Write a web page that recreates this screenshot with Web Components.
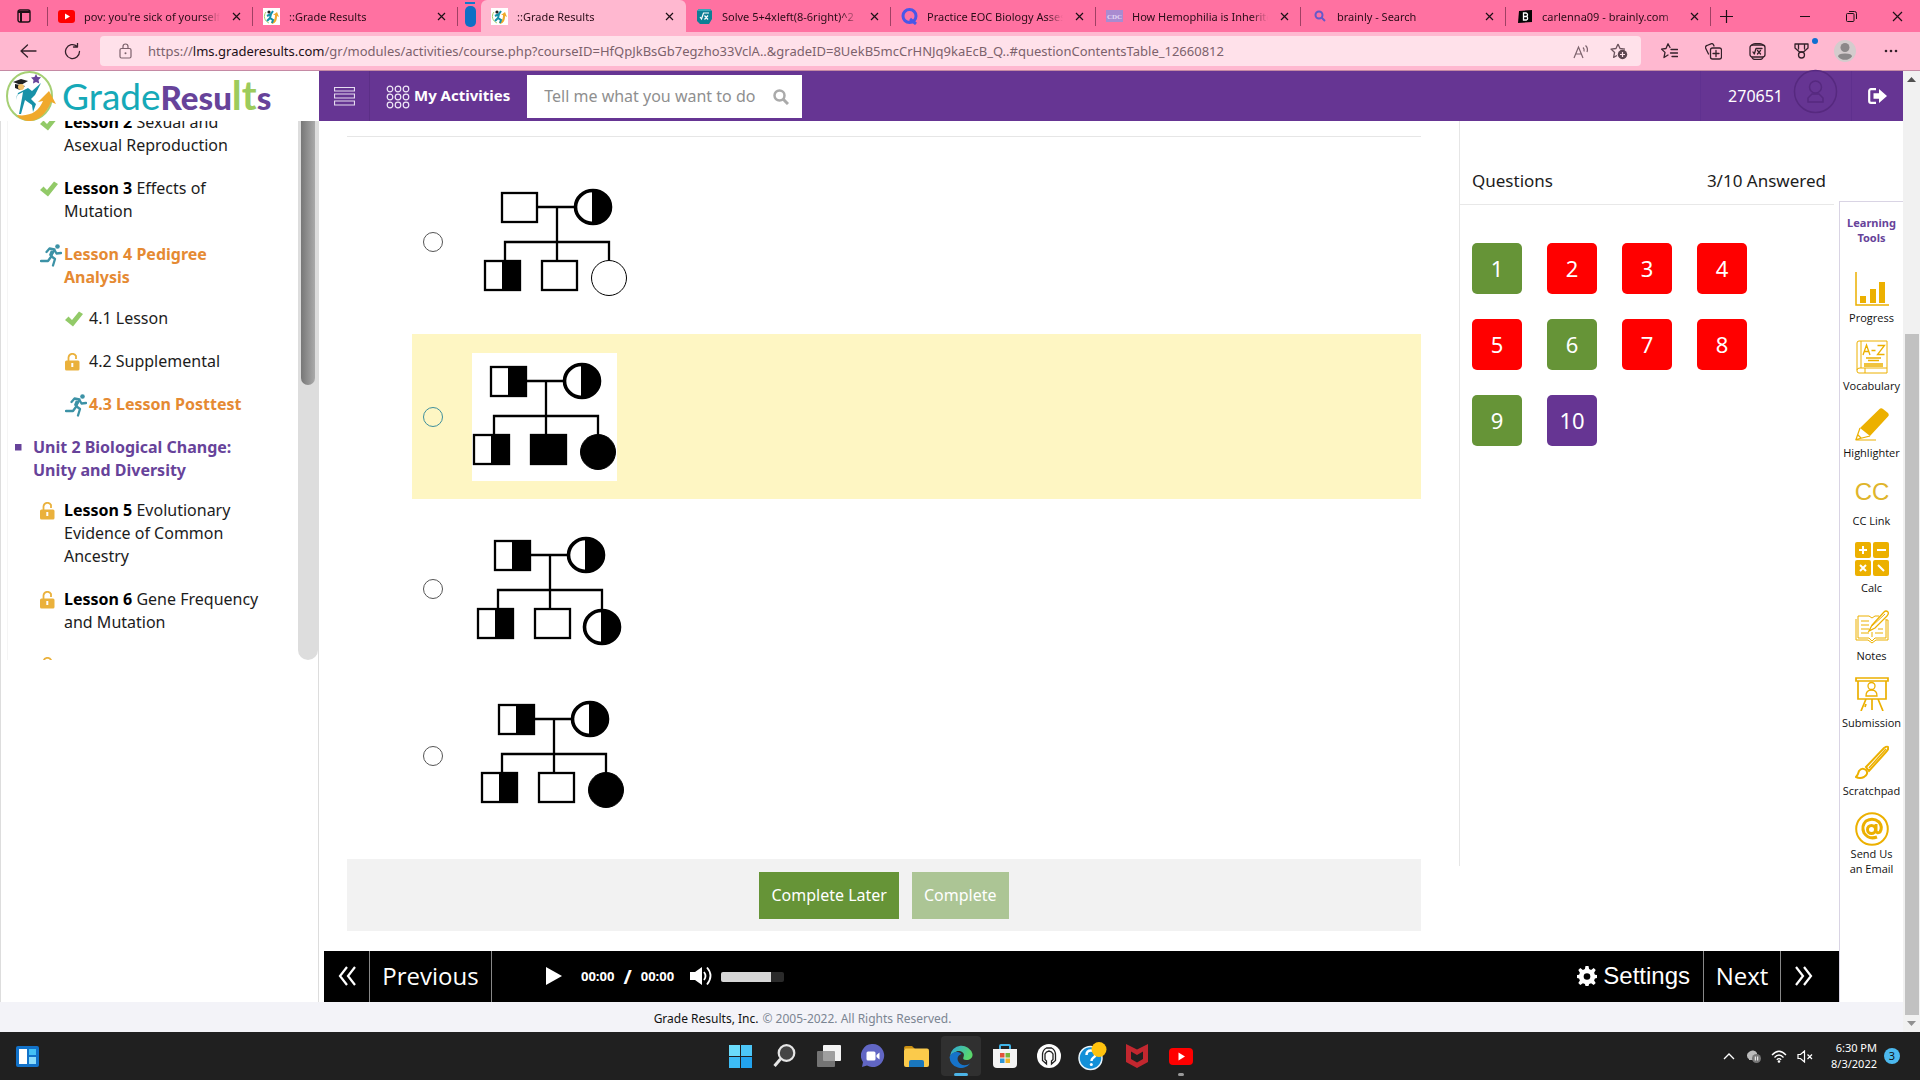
<!DOCTYPE html>
<html lang="en">
<head>
<meta charset="utf-8">
<title>::Grade Results</title>
<style>
html,body{margin:0;height:100%}
body{font-family:"Noto Sans","Open Sans",sans-serif;color:#1c1c1c;background:#fff;overflow:hidden}
</style>
</head>
<body>
<desktop-screen></desktop-screen>
<script>
const BASE = `*{box-sizing:border-box}a{color:inherit;text-decoration:none}button{font:inherit;color:inherit;background:none;border:0;padding:0;margin:0;cursor:pointer}svg{display:block;flex:none}ul{list-style:none;margin:0;padding:0}`;
function define(name, css, markup) {
  customElements.define(name, class extends HTMLElement {
    constructor() {
      super();
      this.attachShadow({ mode: 'open' });
    }
    connectedCallback() {
      const t = document.createElement('template');
      t.innerHTML = `<style>${BASE}${css}</style>` + (typeof markup === 'function' ? markup(this) : markup);
      this.shadowRoot.replaceChildren(t.content.cloneNode(true));
    }
  });
}
const svg = (w, h, body, vb) => `<svg width="${w}" height="${h}" viewBox="${vb || `0 0 ${w} ${h}`}" fill="none" aria-hidden="true">${body}</svg>`;

/* ---------- shared artwork ---------- */
const RUNNER_BODY = `<circle cx="17.500" cy="2.500" r="2.300" fill="currentColor"/><path d="M6.500 8 L9.500 4.500 L14.500 5.500 L11 12 L15 15 L13 21.500 M14.500 6 L16.500 9.500 L21 9 M10.500 13.500 L8 17 L1 17" stroke="currentColor" stroke-width="2.300" stroke-linecap="round" stroke-linejoin="round"/><path d="M12.500 7l-2 5" stroke="currentColor" stroke-width="3.500"/>`;
const FAVICON = svg(17, 17, `<rect width="17" height="17" fill="#fff"/><path d="M3 4a7 7 0 0 0 3 11" stroke="#a6cf6b"/><path d="M9 16c4-1 5-4 5-8l2 1-2-5-4 3 2 0c0 4-1 6-4 7z" fill="#f0a92c"/><path d="M10 3L8 6 4 8M8 6l-1 4 3 2-1 3M7 10l-3 3" stroke="#1390a8" stroke-width="2"/><circle cx="6" cy="4" r="1.600" fill="#222"/>`);
const FAVS = {
  youtube: svg(17, 13, `<rect width="17" height="13" rx="3" fill="#f00"/><path d="M7 3.500v6l5-3z" fill="#fff"/>`),
  grade: FAVICON,
  math: svg(17, 17, `<path d="M3 1h11l2 2v8l-3 5H4l-3-3V3z" fill="#0e7f95"/><path d="M1 3l2-2h11l1 2z" fill="#37a7b9"/><path d="M4 9l1.500 2L7.500 5H13M8.500 7.500l3.500 4M12 7.500l-3.500 4" stroke="#fff" stroke-width="1.200"/>`),
  quiz: svg(17, 17, `<circle cx="8.500" cy="8" r="6.500" stroke="#4957e8" stroke-width="3"/><path d="M9 11l6 5" stroke="#4957e8" stroke-width="3"/>`),
  cdc: svg(17, 12, `<rect width="17" height="12" fill="#a98bd0"/><text x="8.500" y="9" font-family="Liberation Serif" font-weight="700" font-size="7" fill="#e4d7f5" text-anchor="middle">CDC</text>`),
  search: svg(12, 12, `<circle cx="5" cy="5" r="3.500" stroke="#6559c9" stroke-width="2"/><path d="M7.500 7.500l3.500 3.500" stroke="#6559c9" stroke-width="2"/>`),
  brainly: svg(14, 13, `<path d="M1 1L14 0V12L0 13z" fill="#050505"/><path d="M5.500 3v7h3a2 2 0 0 0 0-3.600A1.800 1.800 0 0 0 8 3zM5.500 6.500h2.500" stroke="#fff" stroke-width="1.300"/>`)
};
const close = (s = 9) => svg(s, s, `<path d="M1 1L${s - 1} ${s - 1}M${s - 1} 1L1 ${s - 1}" stroke="#1d1016" stroke-width="1.200"/>`);

/* ---------- browser chrome ---------- */
define('browser-tab', `
:host{display:flex;align-items:center;flex:0 1 205px;min-width:0;height:32px;padding:0 11px 0 10px;position:relative;font-size:11px;color:#2a0d18}
:host([active]){background:#ffb8d0;border-radius:6px 6px 0 0}
:host([line])::after{content:"";position:absolute;right:0;top:7px;width:1px;height:19px;background:#a04064}
.i{width:17px;display:flex;justify-content:center;flex:none}
span.t{flex:1;min-width:0;margin:0 10px 0 9px;line-height:17px;white-space:nowrap;overflow:hidden;-webkit-mask-image:linear-gradient(90deg,#000 88%,transparent)}
button{width:12px;display:flex;justify-content:center;flex:none}`,
  el => `<span class="i">${FAVS[el.getAttribute('icon')]}</span><span class="t"><slot></slot></span><button aria-label="Close tab">${close()}</button>`);

define('tab-strip', `
:host{display:flex;height:32px;background:#ff71a1;align-items:stretch}
.menu{width:48px;display:flex;align-items:center;justify-content:center;position:relative}
.menu::after{content:"";position:absolute;right:0;top:7px;width:1px;height:19px;background:#a04064}
.group{width:23px;display:flex;flex-direction:column;align-items:center;gap:2px;padding:2px 0 0 1px}
.group i{width:10px;height:2px;background:#0f79cc}.group b{width:11px;height:21px;border-radius:5px;background:#0f6fc5}
.new{width:30px;display:flex;align-items:center;justify-content:center}
.win{margin-left:auto;display:flex}.win button{width:46px;display:flex;align-items:center;justify-content:center}`, `
<button class="menu" aria-label="Tab actions">${svg(14, 14, '<rect x="1" y="1" width="12" height="12" rx="2" stroke="#1d1016" stroke-width="1.400"/><path d="M1 3h12M4 3v10" stroke="#1d1016" stroke-width="2"/>')}</button>
<browser-tab icon="youtube" line>pov: you're sick of yourself</browser-tab>
<browser-tab icon="grade" line>::Grade Results</browser-tab>
<div class="group"><i></i><b></b></div>
<browser-tab icon="grade" active>::Grade Results</browser-tab>
<browser-tab icon="math" line>Solve 5+4xleft(8-6right)^2</browser-tab>
<browser-tab icon="quiz" line>Practice EOC Biology Assessment</browser-tab>
<browser-tab icon="cdc" line>How Hemophilia is Inherited</browser-tab>
<browser-tab icon="search" line>brainly - Search</browser-tab>
<browser-tab icon="brainly" line>carlenna09 - brainly.com</browser-tab>
<button class="new" aria-label="New tab">${svg(15, 15, '<path d="M7.500 1v13M1 7.500h13" stroke="#1d1016" stroke-width="1.200"/>')}</button>
<div class="win"><button aria-label="Minimize">${svg(10, 10, '<path d="M0 5.500h10" stroke="#1d1016"/>')}</button>
<button aria-label="Restore">${svg(11, 11, '<rect x=".5" y="2.500" width="7.500" height="8" rx="1" stroke="#1d1016"/><path d="M3 .5h5.500a2 2 0 0 1 2 2V8" stroke="#1d1016"/>')}</button>
<button aria-label="Close">${close(11)}</button></div>`);

const S = 'stroke="#34212a" stroke-width="1.300" stroke-linejoin="round" stroke-linecap="round"';
define('address-bar', `
:host{display:flex;height:39px;background:#ffb8d0;border-bottom:1px solid #c58aa4;align-items:center;padding:0 6px}
button{width:44px;height:34px;display:flex;align-items:center;justify-content:center;position:relative;flex:none}
.box{flex:1;min-width:0;height:30px;margin:0 6px;border-radius:4px;background:#ffe1ea;display:flex;align-items:center;padding:0 4px 0 19px;gap:16px}
.acts{display:flex}.box button{width:37px}
.url{flex:1;min-width:0;font-size:13px;line-height:20px;color:#7c626c;white-space:nowrap;overflow:hidden}
.url b{font-weight:400;color:#1d1016}
.dot{position:absolute;right:5px;top:4px;width:6px;height:6px;border-radius:50%;background:#0f6fd0}
.more{width:46px;margin-left:1px}`, `
<button aria-label="Back">${svg(17, 14, `<path d="M7.500 1L1 7l6.500 6M1 7h15" ${S}/>`)}</button>
<button aria-label="Refresh">${svg(17, 17, `<path d="M15.500 8.500a7 7 0 1 1-2.500-5.300M13.500 0v4h-4" ${S}/>`)}</button>
<div class="box">${svg(13, 16, '<rect x="1" y="5.500" width="11" height="9.500" rx="1.500" stroke="#7c626c" stroke-width="1.200"/><path d="M4 5.500V3.500a2.500 2.500 0 0 1 5 0v2" stroke="#7c626c" stroke-width="1.200"/><circle cx="6.500" cy="10.300" r="1" fill="#7c626c"/>')}
<div class="url">https://<b>lms.graderesults.com</b>/gr/modules/activities/course.php?courseID=HfQpJkBsGb7egzho33VclA..&amp;gradeID=8UekB5mcCrHNJq9kaEcB_Q..#questionContentsTable_12660812</div>
<div class="acts"><button aria-label="Read aloud">${svg(17, 15, '<path d="M1 14L5.500 3 10 14M2.800 10h5.500M10 3.500a4 4 0 0 1 1 4M12.500 1.500a6 6 0 0 1 1.500 6.500" stroke="#7c626c" stroke-width="1.200"/>')}</button>
<button aria-label="Add to favorites">${svg(18, 17, '<path d="M8 1l2 4.500 5 .6M8 1L6 5.500l-5 .6 3.600 3.300-1 5L7 12.500" stroke="#6d545e" stroke-width="1.300" stroke-linejoin="round"/><circle cx="12.500" cy="11.500" r="4.700" fill="#5c4650"/><path d="M12.500 9v5M10 11.500h5" stroke="#ffe1ea" stroke-width="1.200"/>')}</button></div></div>
<button aria-label="Favorites">${svg(17, 16, `<path d="M9 4.500L7 .8 5 5.500l-4.500.6L4 9.400 3 14.500 7 12M10 6.500h6.500M9.500 10h7M11 13.500h5.500" ${S}/>`)}</button>
<button aria-label="Collections">${svg(17, 17, `<rect x="5.500" y="5" width="11" height="11" rx="2" ${S}/><path d="M11 7.500v6M8 10.500h6M3.500 11L.8 5.500A2 2 0 0 1 2 2.500L6 .8a2 2 0 0 1 2.500 1L9 3" ${S}/>`)}</button>
<button aria-label="Math solver">${svg(17, 17, `<rect x="1" y="2" width="15" height="12" rx="2.500" ${S}/><path d="M3 14.500q1 2 3 2h5q2 0 3-2M3 2Q4 .7 6 .7h5q2 0 3 1.300M4 9l1.300 2L7 5.500h6M8.500 7.500l3 3.500M11.500 7.500l-3 3.500" ${S}/>`)}</button>
<button aria-label="Rewards">${svg(15, 16, `<path d="M1 1h13v4l-4.500 4h-4L1 5zM4.500 1v5M10.500 1v5" ${S}/><circle cx="7.500" cy="12" r="3" ${S}/>`)}<i class="dot"></i></button>
<button aria-label="Profile">${svg(22, 22, '<circle cx="11" cy="11" r="11" fill="#d4cccd"/><circle cx="11" cy="7.500" r="4.500" fill="#8b8889"/><path d="M4 16.500q0-3 7-3t7 3a9 9 0 0 1-14 0z" fill="#8b8889"/>')}</button>
<button class="more" aria-label="More">${svg(14, 4, '<g fill="#34212a"><circle cx="2" cy="2" r="1.300"/><circle cx="7" cy="2" r="1.300"/><circle cx="12" cy="2" r="1.300"/></g>')}</button>`);

/* ---------- application header ---------- */
define('grade-logo', `
:host{display:flex;align-items:center;width:319px;height:50px;background:#fff;padding-left:6px;flex:none}
.w{font-family:Lato,sans-serif;font-size:37px;line-height:50px;margin-left:5px;color:#16a9b8;white-space:nowrap}
.w b{font-weight:900;font-size:33px;color:#67439a}.w i{font-style:normal;font-weight:700;font-size:40px;color:#9dcb5c}`, `
${svg(51, 50, `<ellipse cx="23.500" cy="25" rx="22.500" ry="24" stroke="#a5cf74" stroke-width="2"/><path d="M11 44c13 2 22-4 26-14l-5 1 11-11 7 13-5-2c-5 14-17 22-27 18-4-1-6-3-7-5z" fill="#f0a92c"/><path d="M12 22l10-5 4 3 9-8-6 12-4 4 5 5-3 8-1-7-7-5-4 14-2 0 3-16 1-6-6 3-1 5z" fill="#1791a8"/><path d="M7 11l8-3 7 2-7 4zM9 13v4l5 2 5-4" fill="#222"/><circle cx="15" cy="16" r="3" fill="#f5c46b"/><path d="M30 3l1.500 3 3.500.3-2.500 2.700.8 3.500-3.300-1.500-3 1.500.5-3.500L25 6.500l3.500-.5z" fill="#67439a"/>`)}
<span class="w">Grade<b>Resu</b><i>lt</i><b>s</b></span>`);

define('app-header', `
:host{display:flex;height:50px;background:#663593;color:#fff;flex:none}
.m{width:51px;display:flex;align-items:center;justify-content:center;border-right:1px solid #5c2f87}
.act{display:flex;align-items:center;gap:4px;font-weight:700;font-size:15px;padding:0 17px 2px 16px}
.act svg{margin-top:3px}
.s{display:flex;align-items:center;width:275px;height:43px;margin-top:4px;background:#fff;padding:0 13px 0 17px}
.s input{flex:1;min-width:0;border:0;outline:0;padding:0 0 1px;font:16px/25px "Noto Sans",sans-serif;color:#444}
.s input::placeholder{color:#8f8f8f;opacity:1}
.u{margin-left:auto;display:flex;align-items:center;border-left:1px solid #603190;border-right:1px solid #5f308e;padding:0 13px 0 27px;font-size:16px;gap:10px}
.u svg{margin-bottom:9px}
.o{width:51px;display:flex;align-items:center;justify-content:center}`, `
<grade-logo></grade-logo>
<button class="m" aria-label="Menu">${svg(21, 20, '<path d="M.5 1.500h20v3.500H.5zM.5 8h20v4H.5zM.5 15h20v4H.5z" stroke="#e6dcf0" stroke-width="1.200"/>')}</button>
<a class="act" href="#activities">${svg(24, 24, [4, 12, 20].map(y => [4, 12, 20].map(x => `<circle cx="${x}" cy="${y}" r="2.800" stroke="#efe8f6" stroke-width="1.200"/>`).join('')).join(''))}My Activities</a>
<label class="s"><input type="text" placeholder="Tell me what you want to do" aria-label="Tell me what you want to do">${svg(16, 16, '<circle cx="6.500" cy="6.500" r="5" stroke="#aaa" stroke-width="2.500"/><path d="M10 10l5 5" stroke="#aaa" stroke-width="3"/>')}</label>
<a class="u" href="#profile"><span>270651</span>${svg(45, 45, '<g stroke="#56297f" stroke-width="1.500"><circle cx="22.500" cy="22.500" r="21"/><circle cx="22.500" cy="18" r="6"/><path d="M15 33v-4l4-4h7l4 4v4z"/></g>')}</a>
<button class="o" aria-label="Log out">${svg(19, 16, '<path d="M8 1.200H3A1.800 1.800 0 0 0 1.200 3v10A1.800 1.800 0 0 0 3 14.800h5" stroke="#fff" stroke-width="2.200"/><path d="M5.500 5.300H11V1l8 7-8 7v-4.300H5.500z" fill="#fff"/>')}</button>`);

/* ---------- lesson sidebar ---------- */
const STATUS = {
  done: svg(18, 16, '<path d="M0 9l3.500-3.500L7 9 14 .5 18 3 8 15.500z" fill="#92ca68"/>'),
  open: svg(15, 18, '<path d="M3.500 8V4.500a4 4 0 0 1 7.500-1.500v3" stroke="#eab13c" stroke-width="1.800"/><rect y="7.500" width="14.500" height="10" rx="1.500" fill="#eab13c"/><path d="M7.300 10v4" stroke="#fff" stroke-width="2"/>'),
  active: `<span style="color:#3c92a6">${svg(22, 23, RUNNER_BODY)}</span>`,
  unit: svg(7, 7, '<path d="M0 0h6.500v6.500H0z" fill="#67439a"/>')
};
define('lesson-item', `
:host{display:block}
a{display:flex;font-size:16px;line-height:23px}
.i{width:24px;flex:none;padding-top:4px}
:host([status=open]) .i{padding-top:3px}
:host([status=active]) .i{padding-top:1px}
:host([status=active]) a{color:#e58a33;font-weight:700}
:host([status=unit]) .i{width:18px;padding-top:8px}
:host([status=unit]) a{color:#67439a;font-weight:700}
::slotted(b){font-weight:700;color:#000}`,
  el => `<a href="#lesson"><span class="i">${STATUS[el.getAttribute('status')]}</span><span><slot></slot></span></a>`);

define('lesson-sidebar', `
:host{display:flex;flex-direction:column;width:319px;flex:none;border-right:1px solid #ddd;border-left:1px solid #ddd;padding-left:6px}
.view{display:flex;height:539px;overflow:hidden;border-left:1px solid #f5f5f5}
nav{flex:1;padding:0 28px 0 7px;margin-top:-10px}
.l{display:flex;flex-direction:column;gap:20px;margin-left:25px}
.l .l{margin:18px 0 0 25px}
.n{margin:19px 0 17px}
.bar{width:20px;background:#ddd;border-radius:0 0 10px 10px;padding:0 3px}
.bar i{display:block;height:264px;border-radius:0 0 7px 7px;background:linear-gradient(90deg,#777,#aaa)}`, `
<div class="view"><nav>
<div class="l">
<lesson-item status="done"><b>Lesson 2</b> Sexual and Asexual Reproduction</lesson-item>
<lesson-item status="done"><b>Lesson 3</b> Effects of Mutation</lesson-item>
<div><lesson-item status="active">Lesson 4 Pedigree Analysis</lesson-item>
<div class="l"><lesson-item status="done">4.1 Lesson</lesson-item><lesson-item status="open">4.2 Supplemental</lesson-item><lesson-item status="active">4.3 Lesson Posttest</lesson-item></div></div>
</div>
<lesson-item class="n" status="unit">Unit 2 Biological Change: Unity and Diversity</lesson-item>
<div class="l">
<lesson-item status="open"><b>Lesson 5</b> Evolutionary Evidence of Common Ancestry</lesson-item>
<lesson-item status="open"><b>Lesson 6</b> Gene Frequency and Mutation</lesson-item>
<lesson-item status="open"></lesson-item>
</div></nav><div class="bar"><i></i></div></div>`);

/* ---------- pedigree answers ---------- */
const box = (x, y, kind) => `<rect x="${x + 1}" y="${y + 1}" width="35" height="29" fill="${kind === 'full' ? '#000' : '#fff'}" stroke="#000" stroke-width="2.300"/>` + (kind === 'half' ? `<path d="M${x + 18} ${y}h19v31h-19z" fill="#000"/>` : '');
const round = (x, y, kind) => kind === 'half'
  ? `<ellipse cx="${x}" cy="${y}" rx="17.500" ry="16.500" fill="#fff" stroke="#000" stroke-width="3.600"/><path d="M${x - 1} ${y - 17}h1a18 17 0 0 1 0 34h-1z" fill="#000"/>`
  : `<circle cx="${x}" cy="${y}" r="17.500" fill="${kind === 'full' ? '#000' : '#fff'}" stroke="#000" stroke-width="1"/>`;
define('pedigree-chart', `:host{display:block;background:#fff}svg{overflow:visible}`, el => {
  const [v, c, h] = el.getAttribute('at').split(' ').map(Number);
  const [father, mother, ...k] = el.getAttribute('people').split(' ');
  return svg(145, h, `<path d="M${v - 20} ${c}H${v + 18}M${v} ${c}V${c + 55}M${v - 52} ${c + 55}V${c + 35}H${v + 52}V${c + 54}" stroke="#000" stroke-width="2.300"/>`
    + box(v - 56, c - 15, father) + round(v + 36, c, mother) + box(v - 73, c + 53, k[0]) + box(v - 16, c + 53, k[1]) + round(v + 52, c + (k[2] === 'half' ? 72 : 71), k[2]));
});
define('answer-options', `
:host{display:block}
fieldset{border:0;margin:0;padding:0 0 0 65px;min-width:0}
label{display:flex;align-items:center;padding:18px 11px 18px;gap:29px}
label.hover{background:#fef6c3;padding:19px 11px 18px}
input{appearance:none;width:20px;height:20px;margin:0;border:1px solid #555;border-radius:50%;background:#fff}
.hover input{border-color:#3e8f9c;background:transparent}`, `
<fieldset aria-label="Answer choices">
<label><input type="radio" name="answer" aria-label="Answer A"><pedigree-chart at="85 39 148" people="none half half none none"></pedigree-chart></label>
<label class="hover"><input type="radio" name="answer" aria-label="Answer B"><pedigree-chart at="74 28 128" people="half half half full full"></pedigree-chart></label>
<label><input type="radio" name="answer" aria-label="Answer C"><pedigree-chart at="78 38 144" people="half half half none half"></pedigree-chart></label>
<label><input type="radio" name="answer" aria-label="Answer D"><pedigree-chart at="82 22 118" people="half half half none full"></pedigree-chart></label>
</fieldset>`);

define('question-panel', `
:host{display:block;width:380px;flex:none;border-left:1px solid #e6e6e6;height:745px}
.h{display:flex;justify-content:space-between;padding:47px 8px 10px 12px;font-size:17px;line-height:26px;margin-right:5px;border-bottom:1px solid #e8e8e8}
.g{display:grid;grid-template-columns:repeat(4,50px);gap:25px;padding:38px 12px}
button{height:51px;border-radius:5px;background:#f00;color:#fff;font-size:22px;padding-bottom:2px}
.ok{background:#669437}.now{background:#663593}`,
  () => `<div class="h"><span>Questions</span><span>3/10 Answered</span></div><div class="g">${[1, 2, 3, 4, 5, 6, 7, 8, 9, 10].map(n => `<button class="${[1, 6, 9].includes(n) ? 'ok' : n === 10 ? 'now' : ''}">${n}</button>`).join('')}</div>`);

/* ---------- learning tools ---------- */
const Y = '#ecb000', T = `stroke="${Y}"`;
const TOOLS = {
  Progress: `<path d="M1 0v33h33" ${T} stroke-width="1.500"/><path d="M5 24h6v7H5zM15 17h6v14h-6zM24 10h6v21h-6z" fill="${Y}"/>`,
  Vocabulary: `<path d="M2 3q0-2 2-2h28v32H4q-2 0-2-2zM6 1v27M2 30q0-2 3-2h27M10 28v5" ${T}/><path d="M8 15l3.500-10L15 15M9 11.500h5M16.500 10.500h4M22.500 5.500h7L22.500 14.500h7M11 18h15M13 20.500h11M9 24h19M9 26h19" ${T} stroke-width="1.300"/>`,
  Highlighter: `<path d="M5 21L24 2.500q2-2 4-.5l5 4q1.500 2 0 3.500L15 29z" fill="${Y}"/><path d="M5 21l-4 11.500L15 29M3 28l3 3M1 33h20" ${T} stroke-width="1.200"/>`,
  'CC Link': `<text x="17" y="25" font-family="Liberation Sans" font-size="24" fill="#dfb52b" text-anchor="middle">CC</text>`,
  Calc: `<g fill="${Y}"><rect width="16" height="16" rx="2"/><rect x="18" width="16" height="16" rx="2"/><rect y="18" width="16" height="16" rx="2"/><rect x="18" y="18" width="16" height="16" rx="2"/></g><path d="M4 8h8M8 4v8M22 8h9M5 23l6 6M11 23l-6 6M23 23l6 6" stroke="#fff" stroke-width="2"/>`,
  Notes: `<path d="M3 6h11l3 2 3-2h4M31 9v19H20l-3 3-3-3H3V6M1 9v21h12l4 3 4-3h12V10h-2M6 11h8M6 15h8M6 19h8M6 23h8M17 27v-5M20 23h8M23 19h5" ${T}/><path d="M14 21l3-6L29 2q2-2 4 0 1 2-1 4L20 18z" ${T} stroke-width="1.300"/><path d="M17 16L30 4" ${T}/>`,
  Submission: `<path d="M1 1h32v3H1zM3 4v18h28V4M6 34l5-12M17 22v11M28 34l-5-12M10 30l1-3" ${T} stroke-width="1.700"/><circle cx="16.500" cy="9" r="3.500" ${T} stroke-width="1.300"/><path d="M11 19q0-6 5.500-6t5.500 6z" ${T} stroke-width="1.300"/>`,
  Scratchpad: `<path d="M1 32q2-2 3-6 3-4 7-1 3 4-2 7-4 2-8 0z" ${T} stroke-width="2"/><path d="M11 22L29 3q3-2 4-1 1 2-2 5L14 26z" ${T} stroke-width="2"/><path d="M14 23L31 4" ${T} stroke-width="1.500"/>`,
  'Send Us an Email': `<circle cx="17" cy="17" r="15.800" ${T} stroke-width="2"/><circle cx="16.500" cy="17.500" r="4" ${T} stroke-width="3"/><path d="M21 12v7q1 3 4 1 3-5-1-10-6-5-13-1-5 5-2 12 5 7 13 4" ${T} stroke-width="3"/>`
};
define('tool-link', `
:host{display:block}
a{display:flex;flex-direction:column;align-items:center;gap:4px;font-family:"Open Sans",sans-serif;font-size:11px;line-height:15px;text-align:center;color:#111}
a.two{gap:0}
span{max-width:62px}.two span{max-width:50px}`,
  el => { const n = el.getAttribute('name'); return `<a class="${n.length > 12 ? 'two' : ''}" href="#tool">${svg(34, 34, TOOLS[n])}<span>${n}</span></a>`; });
define('learning-tools', `
:host{display:flex;flex-direction:column;width:64px;flex:none;margin-top:80px;border:1px solid #d9d4e4;border-width:1px 0 0 1px;background:#fff;padding:13px 0 126px}
h2{margin:0 0 27px;font-size:11px;line-height:15px;font-weight:700;color:#67439a;text-align:center}
.l{flex:1;display:flex;flex-direction:column;justify-content:space-between}`,
  () => `<h2>Learning<br>Tools</h2><div class="l">${Object.keys(TOOLS).map(n => `<tool-link name="${n}"></tool-link>`).join('')}</div>`);

/* ---------- player bar ---------- */
const chev = d => svg(18, 20, `<path d="${d}" stroke="#fff" stroke-width="2.200"/>`);
define('media-bar', `
:host{display:flex;height:51px;background:#000;color:#fff;margin-left:5px;flex:none;align-items:stretch;font-family:"Open Sans",sans-serif;font-size:24px}
button{display:flex;align-items:center;justify-content:center;padding-bottom:1px}
.a{width:46px;border-right:1px solid #888}.p{width:122px;border-right:1px solid #888}
.p,.n{padding-bottom:2px}
.play{margin-left:54px}.t{display:flex;align-items:center;gap:9px;font-size:13px;font-weight:700;margin:0 16px 0 19px;padding-bottom:1px}
.t i{font-size:20px;font-style:normal;font-weight:700}
input{appearance:none;align-self:center;width:63px;height:10px;margin:0 0 0 9px;background:linear-gradient(90deg,#d6d6d6 50px,#2a2a2a 50px);border-radius:2px}
input::-webkit-slider-thumb{appearance:none;width:0;height:0}
.s{margin-left:auto;gap:6px;font-family:"Liberation Sans",sans-serif;padding-right:13px}
.n{width:78px;border-left:1px solid #888;border-right:1px solid #888}.z{width:58px;padding-right:12px}`, `
<button class="a" aria-label="First">${chev('M9 1L2 10l7 9M17 1l-7 9 7 9')}</button><button class="p">Previous</button>
<button class="play" aria-label="Play">${svg(16, 18, '<path d="M0 0l16 9-16 9z" fill="#fff"/>')}</button>
<div class="t"><span>00:00</span><i>/</i><span>00:00</span></div>
<button aria-label="Mute">${svg(22, 20, '<path d="M0 6h5l7-5v18l-7-5H0z" fill="#fff"/><path d="M14 6q3 4 0 8M17 1.500q7 8 0 17" stroke="#fff" stroke-width="1.800"/>')}</button>
<input type="range" value="80" aria-label="Volume">
<button class="s">${svg(20, 20, '<path d="M8.500 0h3l.6 3 2 .9L16.700 2l2 2-1.600 2.700.8 2 2.100.4v2.800l-2.100.5-.8 2L18.700 17l-2 2-2.600-1.700-2 .8-.6 1.900h-3l-.6-1.900-2-.8L3.300 19l-2-2 1.600-2.600-.8-2L0 11.900V9.100l2.100-.4.8-2L1.300 4l2-2 2.600 1.900 2-.9z" fill="#fff"/><circle cx="10" cy="10.500" r="3.300" fill="#000"/>')}Settings</button>
<button class="n">Next</button><button class="z" aria-label="Last">${chev('M1 1l7 9-7 9M9 1l7 9-7 9')}</button>`);

define('site-footer', `
:host{display:flex;height:30px;background:#f3f3f8;align-items:center;justify-content:center;font-size:12px;color:#7b8592;flex:none;gap:4px;padding:2px 298px 0 0}
a{color:#111}`, `<a href="#about">Grade Results, Inc.</a><span>© 2005-2022. All Rights Reserved.</span>`);

define('page-scrollbar', `
:host{display:flex;flex-direction:column;width:17px;background:#f1f1f1;flex:none;align-items:center}
i{width:14px;flex:1 0 0;max-height:681px;background:#c1c1c1}
svg{margin:6px 0}.gap{height:246px}`, `${svg(9, 5, '<path d="M0 5l4.500-5L9 5z" fill="#505050"/>')}<span class="gap"></span><i></i>${svg(9, 5, '<path d="M0 0l4.500 5L9 0z" fill="#909090"/>')}`);

/* ---------- taskbar ---------- */
const APPS = {
  Start: svg(23, 23, '<path d="M0 0h11v11H0z" fill="#6bdcfb"/><path d="M12 0h11v11H12z" fill="#4cc6f7"/><path d="M0 12h11v11H0z" fill="#3dbcf5"/><path d="M12 12h11v11H12z" fill="#22a3ee"/>'),
  Search: svg(23, 24, '<circle cx="13.500" cy="9" r="7.800" stroke="#e6e6e6" stroke-width="2.200" fill="#444"/><path d="M7.500 15L1.500 22" stroke="#e6e6e6" stroke-width="3"/>'),
  'Task view': svg(24, 22, '<rect x="6" width="18" height="16" rx="1" fill="#f4f4f4"/><rect y="6" width="18" height="16" rx="1" fill="#8a8a8a" fill-opacity=".8"/>'),
  Chat: svg(24, 24, '<path d="M12 0a11.500 11.500 0 1 1-6 21.500L1 23l1-5A11.500 11.500 0 0 1 12 0z" fill="#6166c4"/><rect x="5.500" y="7.500" width="9" height="9" rx="1.500" fill="#fff"/><path d="M15.500 11l3-2.500v7l-3-2.500z" fill="#fff"/>'),
  Files: svg(25, 21, '<path d="M0 2q0-2 2-2h6l3 3h-11z" fill="#c98f12"/><rect y="2.500" width="25" height="18.500" rx="2" fill="#fbca4b"/><path d="M5 21v-5q0-2 2-2h11q2 0 2 2v5z" fill="#1a77bd"/>'),
  Edge: svg(24, 24, '<defs><linearGradient id="g" x1="0" x2="1" y2=".4"><stop stop-color="#2ba5e0"/><stop offset="1" stop-color="#59d76b"/></linearGradient></defs><path d="M1 12A11.500 11.500 0 0 1 23.500 10c.5 4-3 6-6 6-3 0-4-1-3-3 2-4-3-7-7-5.500Q3 9 1 12z" fill="url(#g)"/><path d="M.5 13Q3 7.500 8.500 8c2 0 3 1 4 2-4 1-6 6-1 10 3 2 7 1.500 10-1A11.500 11.500 0 0 1 .5 13z" fill="#1673c9"/>'),
  Store: svg(24, 24, '<path d="M7 5V2q0-1 1-1h8q1 0 1 1v3" stroke="#3fb3e6" stroke-width="2"/><path d="M0 5h24v15q0 4-4 4H4q-4 0-4-4z" fill="#f4f4f4"/><path d="M7 9h4.500v4.500H7z" fill="#e2523a"/><path d="M12.500 9H17v4.500h-4.500z" fill="#78b43c"/><path d="M7 14.500h4.500V19H7z" fill="#2e96d9"/><path d="M12.500 14.500H17V19h-4.500z" fill="#efb32a"/>'),
  Alien: svg(24, 24, '<circle cx="12" cy="12" r="12" fill="#fff"/><path d="M9.500 20l-4-3.500V11q0-5 4-7h5q4 2 4 7v5.500l-4 3.500v-3l1.500-1.500V10q-1-2.500-4-3-3 .5-4 3v5.500L9.500 17z" stroke="#222" stroke-width="1.300"/>'),
  Help: svg(29, 29, '<circle cx="12.500" cy="16" r="11.500" fill="#1390d8" stroke="#e9f5fc" stroke-width="1.500"/><path d="M8.500 13q0-4.500 4.500-4.500t4.500 4q0 2-2.500 3.500-1.500 1-1.500 3" stroke="#fff" stroke-width="2.500"/><circle cx="13.300" cy="22.500" r="1.500" fill="#fff"/><circle cx="21" cy="7.500" r="7.500" fill="#ffc20e"/>'),
  McAfee: svg(22, 24, '<path d="M0 0l11 5.500L22 0v18l-11 6-11-6z" fill="#c2272f"/><path d="M5 7.500l6 3.500 6-3.500V15l-6 3.500L5 15z" fill="#202020"/>'),
  YouTube: svg(24, 17, '<rect width="24" height="17" rx="4" fill="#f00"/><path d="M9.500 4.500v8l6.500-4z" fill="#fff"/>')
};
define('task-bar', `
:host{display:flex;height:48px;background:#202020;color:#fff;flex:none;align-items:center;justify-content:space-between;padding:0 20px 0 16px}
.apps{display:flex;gap:4px;padding-left:5px}
.apps button{width:40px;height:40px;display:flex;align-items:center;justify-content:center;border-radius:4px;position:relative}
.edge{background:#303030}
.edge::after,.yt::after{content:"";position:absolute;bottom:0;width:14px;height:3px;border-radius:2px;background:#4cb4e7}
.yt::after{width:6px;background:#999}
.side{flex:1 1 0;display:flex;align-items:center}
.r{justify-content:flex-end;gap:10px}
time{font-size:11px;line-height:16px;text-align:right;margin:0 -3px 0 8px}
.b{width:16px;height:16px;border-radius:50%;background:#4cb9ef;color:#111;font-size:11px;line-height:16px;text-align:center}`,
  () => `<div class="side"><button aria-label="Widgets">${svg(23, 21, '<rect width="23" height="21" rx="2" fill="#1272c9"/><path d="M3 3h8v15H3z" fill="#fff"/><path d="M13 3h7v6h-7z" fill="#43c1f5"/><path d="M13 11h7v7h-7z" fill="#8adcfb"/>')}</button></div>
<div class="apps">${Object.entries(APPS).map(([n, i]) => `<button aria-label="${n}" class="${n === 'Edge' ? 'edge' : n === 'YouTube' ? 'yt' : ''}">${i}</button>`).join('')}</div>
<div class="side r">${svg(12, 8, '<path d="M1 7l5-5 5 5" stroke="#fff" stroke-width="1.300"/>')}${svg(16, 14, '<path d="M4 10a4 4 0 0 1 0-7 5 5 0 0 1 8 1v7H4z" fill="#bbb"/><circle cx="11.500" cy="9.500" r="4.500" fill="#777"/><path d="M10.300 7.500v4M12.700 7.500v4" stroke="#fff"/>')}${svg(16, 13, '<path d="M1 5q7-7.500 14 0M3.500 7.500q4.500-5 9 0M5.800 9.800q2.200-2.300 4.400 0" stroke="#fff" stroke-width="1.300"/><circle cx="8" cy="11.500" r="1.300" fill="#fff"/>')}${svg(16, 13, '<path d="M1 4.500h2.500L7.500 1v11L3.500 8.500H1zM10.500 4.500l4.500 4.500M15 4.500L10.500 9" stroke="#fff" stroke-width="1.200"/>')}<time>6:30 PM<br>8/3/2022</time><span class="b">3</span></div>`);

/* ---------- whole screen ---------- */
define('desktop-screen', `
:host{display:flex;flex-direction:column;height:100vh}
.page{flex:1;min-height:0;display:flex}
.doc{flex:1;min-width:0;display:flex;flex-direction:column}
.body{flex:1;min-height:0;display:flex;overflow:hidden}
main{flex:1;min-width:0;display:flex;flex-direction:column}
.quiz{flex:1;min-height:0;display:flex}
article{flex:1;min-width:0;padding:15px 38px 0 28px}
answer-options{border-top:1px solid #e6e6e6;padding-top:13px}
.done{display:flex;justify-content:center;gap:13px;background:#f2f2f2;padding:13px 0 12px;margin-top:26px;font-size:16px}
.done button{background:#669437;color:#fff;height:47px;padding:0 12px 2px}
.done button:disabled{background:#acc595}`, `
<tab-strip></tab-strip><address-bar></address-bar>
<div class="page"><div class="doc"><app-header></app-header>
<div class="body"><lesson-sidebar></lesson-sidebar>
<main><div class="quiz"><article><answer-options></answer-options>
<div class="done"><button>Complete Later</button><button disabled>Complete</button></div></article>
<question-panel></question-panel></div><media-bar></media-bar></main>
<learning-tools></learning-tools></div>
<site-footer></site-footer></div><page-scrollbar></page-scrollbar></div>
<task-bar></task-bar>`);
</script>
</body>
</html>
